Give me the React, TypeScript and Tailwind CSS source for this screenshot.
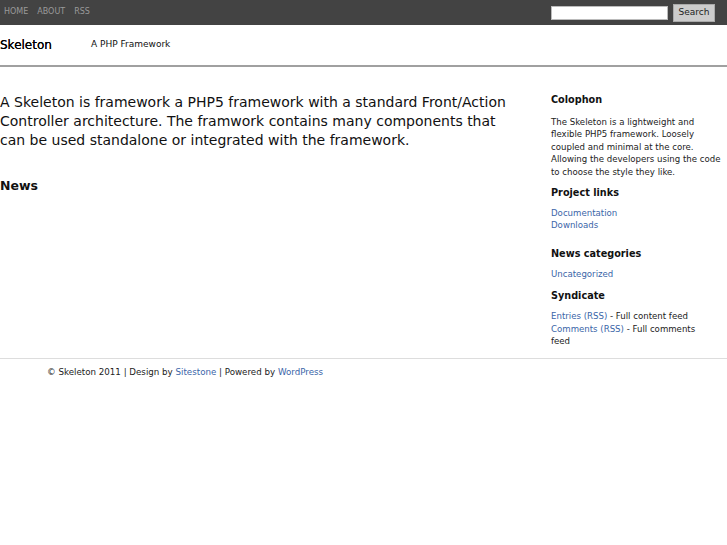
import React from "react";

const font = { fontFamily: '"DejaVu Sans", Verdana, sans-serif' };

export default function App() {
  return (
    <div className="w-[727px] h-[545px] bg-white text-[#222]" style={font}>
      <div className="h-[25px] bg-[#434343] flex items-center justify-between">
        <div className="flex gap-[9px] pl-[4px] text-[8px] text-[#9a9a9a] pb-[1px]">
          <span>HOME</span>
          <span>ABOUT</span>
          <span>RSS</span>
        </div>
        <div className="flex items-center gap-[5px] pr-[12px]">
          <div className="w-[117px] h-[14px] bg-white border border-[#bbb]"></div>
          <div className="w-[42px] h-[18px] bg-[#cccccc] border border-[#aaa] text-[9px] text-[#222] flex items-center justify-center">
            Search
          </div>
        </div>
      </div>
      <div className="h-[42px] flex items-center border-b-2 border-[#a0a0a0]">
        <span className="text-[12px] font-normal text-[#000] w-[91px] [text-shadow:0_0_0.3px_#000]">Skeleton</span>
        <span className="text-[9px] text-[#111]">A PHP Framework</span>
      </div>
      <div className="flex">
        <div className="w-[540px] pt-[26px]">
          <p className="text-[14px] leading-[19px] text-[#111] pr-[20px]">
            A Skeleton is framework a PHP5 framework with a standard Front/Action Controller architecture. The framwork contains many components that can be used standalone or integrated with the framework.
          </p>
          <h2 className="text-[12.5px] font-bold text-[#111] mt-[27px]">News</h2>
        </div>
        <div className="w-[172px] ml-[11px] pt-[26px] text-[8.6px] leading-[12.4px] text-[#222]">
          <h3 className="text-[9.7px] font-bold text-[#111] leading-[14px]">Colophon</h3>
          <p className="mt-[9px]">
            The Skeleton is a lightweight and flexible PHP5 framework. Loosely coupled and minimal at the core. Allowing the developers using the code to choose the style they like.
          </p>
          <h3 className="text-[9.7px] font-bold text-[#111] leading-[14px] mt-[8px]">Project links</h3>
          <div className="mt-[7px] text-[#3a65a8]">
            <div>Documentation</div>
            <div>Downloads</div>
          </div>
          <h3 className="text-[9.7px] font-bold text-[#111] leading-[14px] mt-[15px]">News categories</h3>
          <div className="mt-[7px] text-[#3a65a8]">Uncategorized</div>
          <h3 className="text-[9.7px] font-bold text-[#111] leading-[14px] mt-[9px]">Syndicate</h3>
          <div className="mt-[7px]">
            <span className="text-[#3a65a8]">Entries (RSS)</span> - Full content feed
            <br />
            <span className="text-[#3a65a8]">Comments (RSS)</span> - Full comments
            <br />
            feed
          </div>
        </div>
      </div>
      <div className="mt-[11px] border-t border-[#dddddd] pt-[7px] pl-[47px] text-[8.7px] text-[#222]">
        © Skeleton 2011 | Design by <span className="text-[#3a65a8]">Sitestone</span> | Powered by{" "}
        <span className="text-[#3a65a8]">WordPress</span>
      </div>
    </div>
  );
}
